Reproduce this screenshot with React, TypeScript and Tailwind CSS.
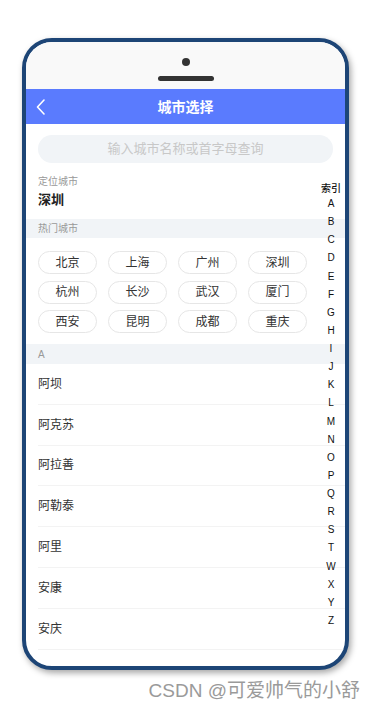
import React from "react";

const hot = ["北京", "上海", "广州", "深圳", "杭州", "长沙", "武汉", "厦门", "西安", "昆明", "成都", "重庆"];
const cities = ["阿坝", "阿克苏", "阿拉善", "阿勒泰", "阿里", "安康", "安庆"];
const letters = ["A", "B", "C", "D", "E", "F", "G", "H", "I", "J", "K", "L", "M", "N", "O", "P", "Q", "R", "S", "T", "W", "X", "Y", "Z"];

export default function App() {
  return (
    <div
      className="w-[375px] h-[708px] bg-white flex flex-col overflow-hidden"
      style={{ fontFamily: '"Liberation Sans", "Noto Sans CJK SC", sans-serif' }}
    >
      <div className="pt-[38px] pl-[22px]">
        <div className="w-[327px] h-[632px] border-4 border-[#1d4576] rounded-[30px] overflow-hidden bg-white shadow-[2px_3px_6px_rgba(0,0,0,0.35)]">
          <div className="relative flex flex-col h-full">
            <div className="h-[47px] bg-[#f9f9f9] flex flex-col items-center shrink-0">
              <div className="mt-[16px] w-2 h-2 rounded-full bg-[#333]" />
              <div className="mt-[10px] w-[56px] h-[5px] rounded-full bg-[#333]" />
            </div>
            <div className="h-[35px] bg-[#5a7bfe] grid grid-cols-[40px_1fr_40px] items-center shrink-0">
              <div className="pl-[10px] flex items-center">
                <svg width="9" height="16" viewBox="0 0 9 16" fill="none">
                  <polyline points="8,1 1.5,8 8,15" stroke="white" strokeWidth="1.6" strokeLinecap="round" strokeLinejoin="round" />
                </svg>
              </div>
              <div className="text-center text-white font-bold text-[14px] leading-none">城市选择</div>
              <div />
            </div>
            <div className="px-[12px] pt-[11px] shrink-0">
              <div className="h-[28px] rounded-full bg-[#f1f4f7] flex items-center justify-center text-[13px] text-[#c8c8c8]">
                输入城市名称或首字母查询
              </div>
            </div>
            <div className="pl-[12px] mt-[12px] text-[10px] leading-[14px] text-[#999] shrink-0">定位城市</div>
            <div className="pl-[12px] mt-[2px] text-[13px] leading-[18px] font-bold text-[#222] shrink-0">深圳</div>
            <div className="mt-[10px] h-[19px] bg-[#f1f4f7] flex items-center pl-[12px] text-[10px] text-[#999] shrink-0">热门城市</div>
            <div className="pl-[12px] pt-[13px] pb-[11px] grid grid-cols-[repeat(4,59px)] gap-x-[11px] gap-y-[6.5px] shrink-0">
              {hot.map((c) => (
                <div key={c} className="h-[23px] rounded-full border border-[#e6e6e6] flex items-center justify-center text-[12px] text-[#333]">
                  {c}
                </div>
              ))}
            </div>
            <div className="h-[20px] bg-[#f1f4f7] flex items-center pl-[12px] text-[10px] text-[#999] shrink-0">A</div>
            {cities.map((c) => (
              <div key={c} className="ml-[12px] h-[40.8px] border-b border-[#f3f3f3] flex items-center text-[12px] text-[#333] shrink-0">
                {c}
              </div>
            ))}
            <div className="absolute top-[139px] right-0 w-[28px] flex flex-col items-center text-[10px] text-[#111]">
              <div className="h-[14px] flex items-center font-medium">索引</div>
              {letters.map((l) => (
                <div key={l} className="h-[18.13px] flex items-center leading-none">
                  {l}
                </div>
              ))}
            </div>
          </div>
        </div>
      </div>
      <div className="mt-[11px] flex justify-end pr-[15px]">
        <div className="text-[19px] leading-none text-[#9a9a9a]">CSDN @可爱帅气的小舒</div>
      </div>
    </div>
  );
}
